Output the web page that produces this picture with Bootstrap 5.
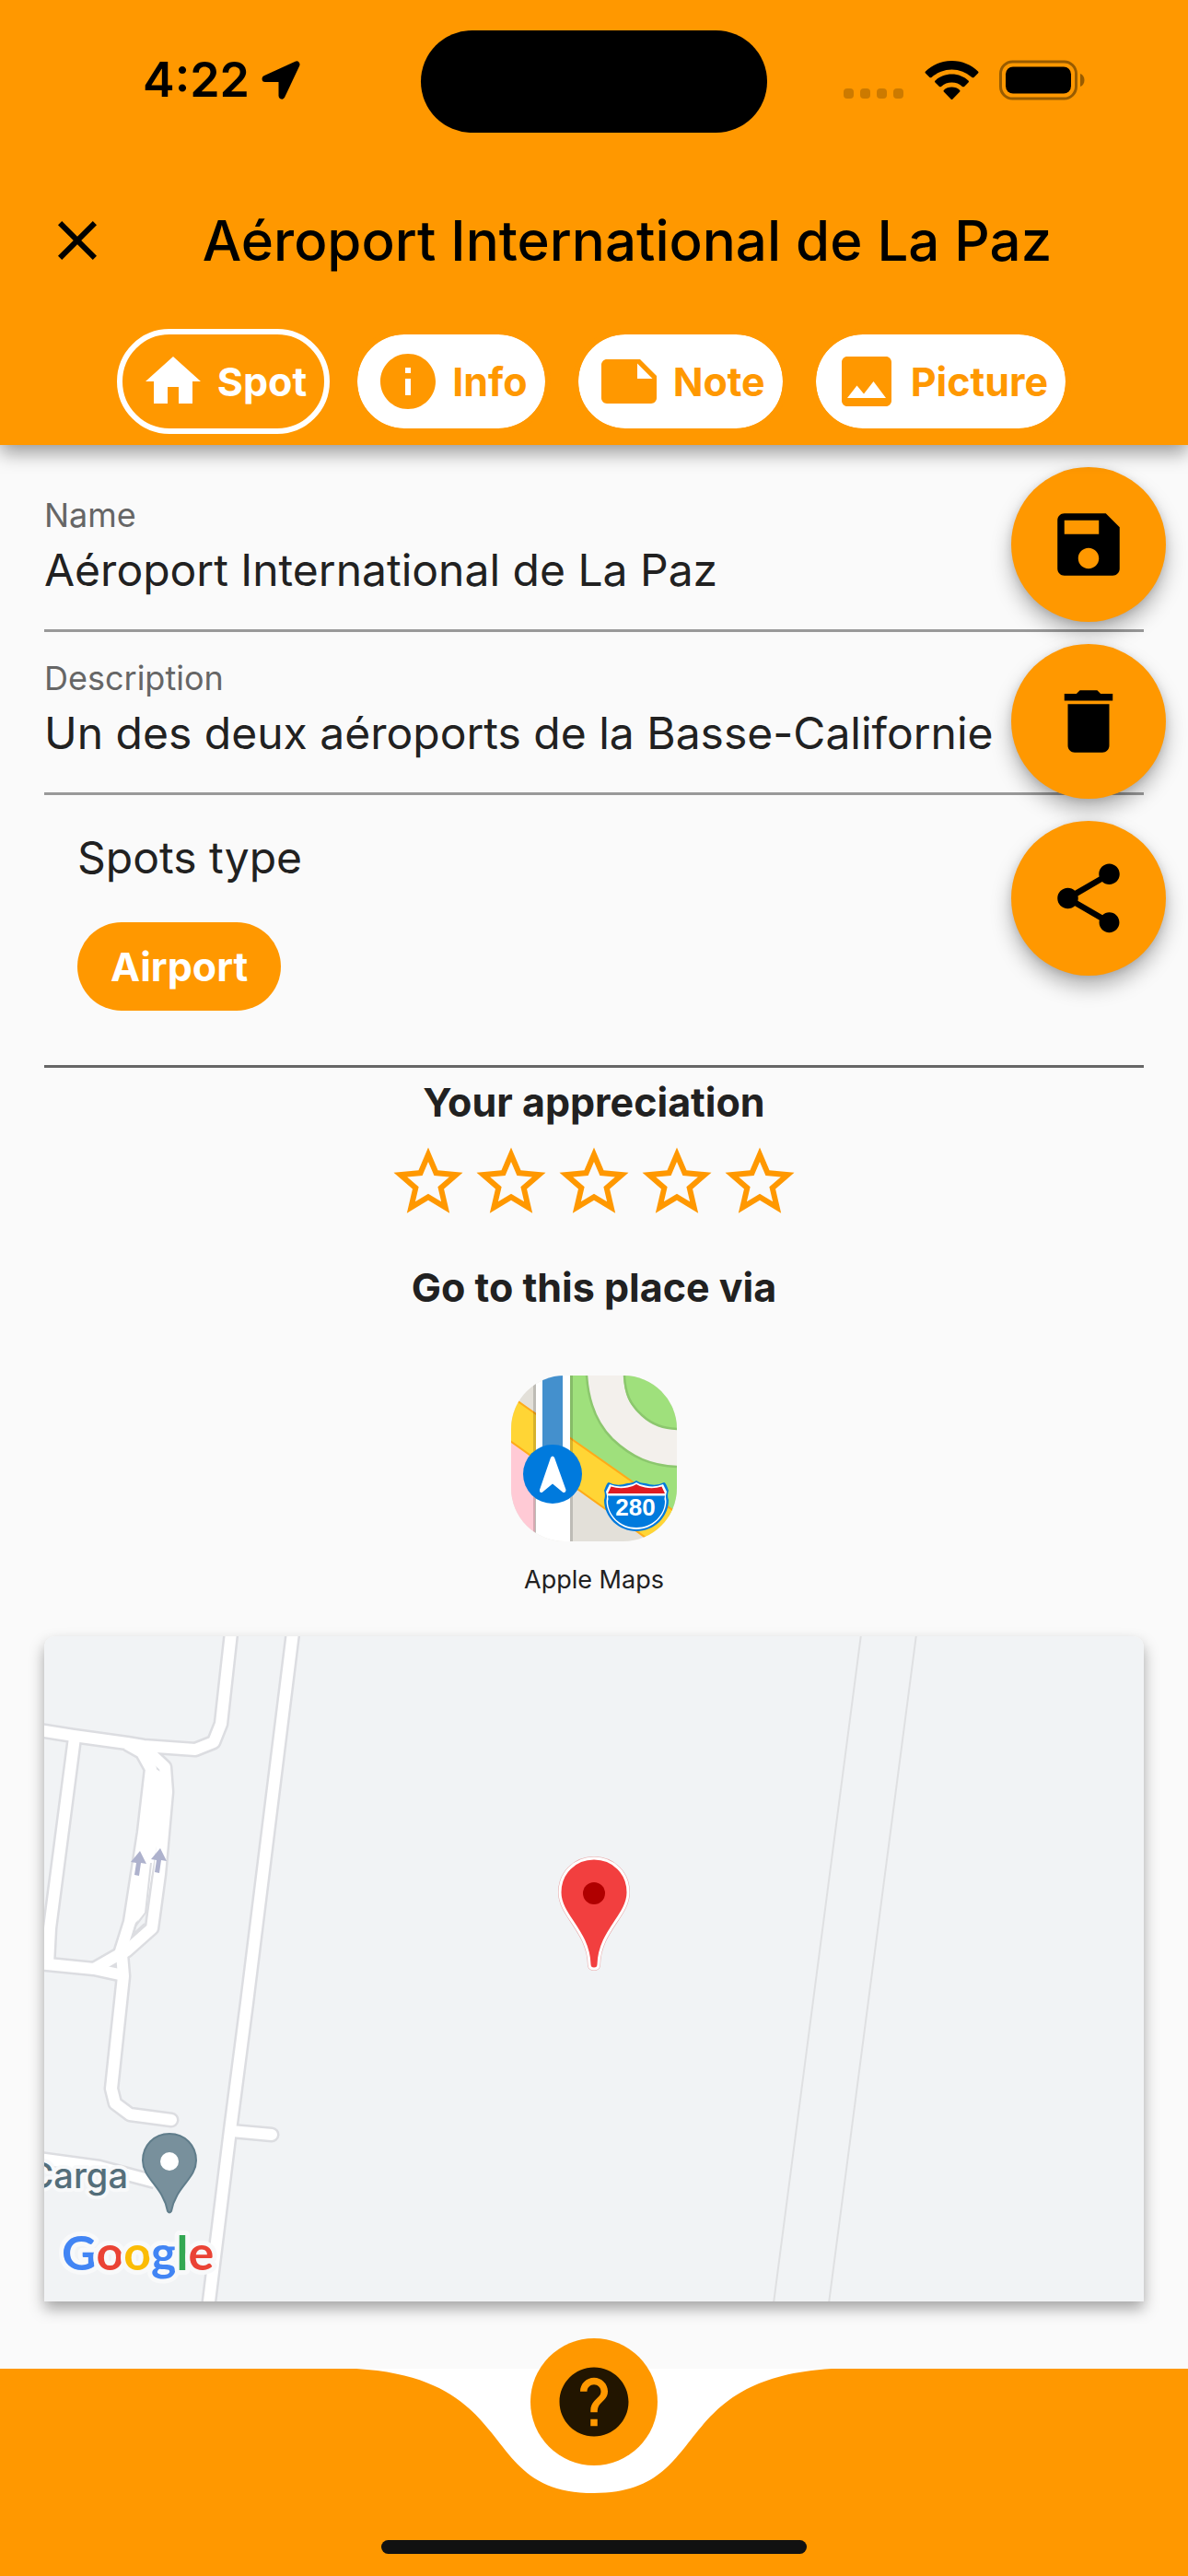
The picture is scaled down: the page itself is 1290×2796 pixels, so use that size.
<!DOCTYPE html>
<html lang="en">
<head>
<meta charset="utf-8">
<meta name="viewport" content="width=device-width, initial-scale=1">
<title>Aéroport International de La Paz</title>
<link href="https://cdn.jsdelivr.net/npm/bootstrap@5.3.0/dist/css/bootstrap.min.css" rel="stylesheet">
<style>
:root { --brand: #ff9800; --ink: #212121; }
body { font-family: Inter, "Liberation Sans", sans-serif; background: #fafafa; color: var(--ink); }
.bg-brand { background: var(--brand); }
svg { display: block; flex: none; }
.ico { width: 72px; height: 72px; fill: currentColor; }
.ico-lg { width: 90px; height: 90px; fill: currentColor; }

.app-header { box-shadow: 0 8px 20px rgba(0,0,0,.4); color: #000; position: relative; z-index: 1; }
.status { display: grid; grid-template-columns: 1fr auto 1fr; padding: 33px 0; }
.status-left { padding: 0 0 4px 155px; gap: 13px; font-size: 52px; font-weight: 600; line-height: 60px; }
.status-right { padding: 0 112px 4px 0; gap: 22px; }
.island { width: 376px; height: 111px; border-radius: 56px; background: #000; }
.toolbar { height: 168px; padding: 0 48px; }
.toolbar h1 { font-size: 60px; font-weight: 500; line-height: 72px; }
.tabs { gap: 24px; padding: 12px 0; }
.tab-pill { display: flex; align-items: center; gap: 12px; height: 114px; padding: 0 19px; border: 6px solid var(--brand); border-radius: 57px; background: #fff; background-clip: padding-box; color: var(--brand); font-size: 43px; font-weight: 700; line-height: 60px; }
.tab-pill.active { background: var(--brand); border-color: #fff; color: #fff; }

.page-main { padding: 26px 48px 72px; }
.field { padding: 29px 0 34px; border-bottom: 3px solid #999; }
.field label { display: block; font-size: 36px; line-height: 42px; color: #666; margin-bottom: 9px; }
.field input { display: block; width: 100%; height: 60px; padding: 0; border: 0; background: none; outline: 0; color: var(--ink); font-size: 48px; line-height: 60px; }
.types { padding: 38px 36px 59px; border-bottom: 3px solid #666; }
.types h2 { font-size: 48px; font-weight: 400; line-height: 60px; margin-bottom: 40px; }
.chip { height: 96px; padding: 0 36px; border: 0; border-radius: 48px; background: var(--brand); color: #fff; font-size: 43px; font-weight: 700; line-height: 60px; }
.actions { padding-top: 7px; }
.head-line { font-size: 43px; font-weight: 700; line-height: 60px; margin: 0; }
.rating { color: var(--brand); margin: 12px 0 39px; }
.rating label { cursor: pointer; }
.maps-link { color: var(--ink); text-decoration: none; gap: 24px; margin: 66px 0 43px; font-size: 27px; line-height: 36px; }
.maps-link svg { border-radius: 58px; }
.fabs { position: absolute; top: 24px; right: 24px; display: flex; flex-direction: column; gap: 24px; }
.fab { display: flex; align-items: center; justify-content: center; width: 168px; height: 168px; padding: 0; border: 0; border-radius: 50%; background: var(--brand); color: #000; box-shadow: 0 12px 22px rgba(0,0,0,.28), 0 2px 8px rgba(0,0,0,.12); }
.map-box { border-radius: 12px 12px 0 0; overflow: hidden; box-shadow: 0 8px 16px rgba(0,0,0,.34); }
.map-box svg { width: 100%; height: auto; }

.bottom-bar { height: 225px; padding-bottom: 24px; }
.notch { position: absolute; top: 0; left: 50%; transform: translateX(-50%); }
.help-btn { position: absolute; top: -33px; left: 50%; transform: translateX(-50%); display: flex; align-items: center; justify-content: center; width: 138px; height: 138px; padding: 0; border: 0; border-radius: 50%; background: var(--brand); color: #221500; }
.home-bar { width: 462px; height: 15px; border-radius: 8px; background: #111; }
</style>
</head>
<body class="d-flex flex-column min-vh-100">

<header class="app-header bg-brand">
  <div class="status align-items-center">
    <div class="status-left d-flex align-items-center">
      <span>4:22</span>
      <svg width="42" height="42" viewBox="0 0 42 42"><path d="M4 19.500 38 4 22 38V19.500z" stroke="#000" stroke-width="7" stroke-linejoin="round"/></svg>
    </div>
    <div class="island"></div>
    <div class="status-right d-flex align-items-center justify-content-end">
      <svg width="66" height="44" viewBox="0 0 66 44" fill="#cc7a00"><rect y="31" width="11" height="11" rx="4"/><rect x="18" y="31" width="11" height="11" rx="4"/><rect x="36" y="31" width="11" height="11" rx="4"/><rect x="54" y="31" width="11" height="11" rx="4"/></svg>
      <svg width="59" height="42" viewBox="0 0 59 42"><path d="M29.500 0C41 0 51 4.500 58 11.500q1 1 0 2L53.500 18q-1 .5-2 0a33 33 0 0 0-44 0q-1 .5-2 0L1 13.500q-1-1 0-2C8 4.500 18 0 29.500 0zM29.500 14.500c7 0 13.500 2.700 18 7q1 1 0 2l-4.500 4.500q-1 .5-2 0a17 17 0 0 0-23 0q-1 .5-2 0L11.500 23.500q-1-1 0-2c4.500-4.300 11-7 18-7zM29.500 28.500c3.400 0 6.400 1.200 8.500 3.200q1 1 0 2L30.500 41.500q-1 1-2 0L21 33.700q-1-1 0-2c2.100-2 5.100-3.200 8.500-3.200z"/></svg>
      <svg width="93" height="44" viewBox="0 0 93 44"><rect x="1.500" y="2" width="82" height="40" rx="13" fill="none" stroke="#995c00" stroke-width="3"/><rect x="7" y="7.500" width="71" height="29" rx="8"/><path d="M88 15c6 2 6 12 0 14z" fill="#995c00"/></svg>
    </div>
  </div>
  <div class="toolbar d-flex align-items-center">
    <button class="btn p-0 border-0 text-black" type="button" aria-label="Close"><svg class="ico" viewBox="0 0 24 24"><path d="M19 6.410 17.590 5 12 10.590 6.410 5 5 6.410 10.590 12 5 17.590 6.410 19 12 13.410 17.590 19 19 17.590 13.410 12z"/></svg></button>
    <h1 class="flex-grow-1 text-center text-nowrap m-0">Aéroport International de La Paz</h1>
  </div>
  <nav class="tabs d-flex justify-content-center">
    <button class="tab-pill active" type="button"><svg class="ico" viewBox="0 0 24 24"><path d="M10 20v-6h4v6h5v-8h3L12 3 2 12h3v8z"/></svg>Spot</button>
    <button class="tab-pill" type="button"><svg class="ico" viewBox="0 0 24 24"><path d="M12 2C6.480 2 2 6.480 2 12s4.480 10 10 10 10-4.480 10-10S17.520 2 12 2zm1 15h-2v-6h2v6zm0-8h-2V7h2v2z"/></svg>Info</button>
    <button class="tab-pill" type="button"><svg class="ico" viewBox="0 0 24 24"><path d="M22 10l-6-6H4c-1.100 0-2 .9-2 2v12.010c0 1.100.9 1.990 2 1.990l16-.01c1.100 0 2-.89 2-1.990v-8zm-7-4.500l5.500 5.500H15V5.500z"/></svg>Note</button>
    <button class="tab-pill" type="button"><svg class="ico" viewBox="0 0 24 24"><path d="M21 19V5c0-1.100-.9-2-2-2H5c-1.100 0-2 .9-2 2v14c0 1.100.9 2 2 2h14c1.100 0 2-.9 2-2zM8.500 13.500l2.500 3.010L14.500 12l4.500 6H5l3.500-4.500z"/></svg>Picture</button>
  </nav>
</header>

<main class="page-main position-relative flex-grow-1">
  <form>
    <div class="field">
      <label for="spot-name">Name</label>
      <input id="spot-name" type="text" value="Aéroport International de La Paz">
    </div>
    <div class="field">
      <label for="spot-desc">Description</label>
      <input id="spot-desc" type="text" value="Un des deux aéroports de la Basse-Californie">
    </div>
    <section class="types">
      <h2>Spots type</h2>
      <button class="chip" type="button">Airport</button>
    </section>
  </form>

  <section class="actions d-flex flex-column align-items-center">
    <h2 class="head-line">Your appreciation</h2>
    <div class="rating d-flex" role="radiogroup" aria-label="Your appreciation">
      <input class="btn-check" type="radio" name="rate" id="r1"><label for="r1" aria-label="1 star"><svg class="ico-lg" viewBox="0 0 24 24"><path id="star" d="M22 9.240l-7.190-.62L12 2 9.190 8.630 2 9.240l5.460 4.730L5.820 21 12 17.270 18.180 21l-1.630-7.030L22 9.240zM12 15.400l-3.760 2.270 1-4.280-3.320-2.880 4.380-.38L12 6.100l1.710 4.040 4.380.38-3.320 2.880 1 4.280L12 15.400z"/></svg></label>
      <input class="btn-check" type="radio" name="rate" id="r2"><label for="r2" aria-label="2 stars"><svg class="ico-lg" viewBox="0 0 24 24"><use href="#star"/></svg></label>
      <input class="btn-check" type="radio" name="rate" id="r3"><label for="r3" aria-label="3 stars"><svg class="ico-lg" viewBox="0 0 24 24"><use href="#star"/></svg></label>
      <input class="btn-check" type="radio" name="rate" id="r4"><label for="r4" aria-label="4 stars"><svg class="ico-lg" viewBox="0 0 24 24"><use href="#star"/></svg></label>
      <input class="btn-check" type="radio" name="rate" id="r5"><label for="r5" aria-label="5 stars"><svg class="ico-lg" viewBox="0 0 24 24"><use href="#star"/></svg></label>
    </div>
    <h2 class="head-line">Go to this place via</h2>
    <a class="maps-link d-flex flex-column align-items-center" href="#map">
      <svg width="180" height="180" viewBox="0 0 180 180">
        <rect width="180" height="180" fill="#e3e0d9"/>
        <path d="M0 72 26 90V180H0z" fill="#ffcad5"/>
        <path d="M64 0H180V160L64 68z" fill="#9fe07c"/>
        <path d="M82 0C84 30 94 53 110 69 130 88 152 99 184 99V58C165 58 153 54 141 43 128 32 123 20 122 0z" fill="#f3f0ec"/>
        <path d="M82 0C84 30 94 53 110 69 130 88 152 99 184 99M123 0C124 20 129 31 142 43 153 53 165 58 184 58" fill="none" stroke="#8cc76e" stroke-width="2.500"/>
        <path d="M-4 20 184 152V203L-4 69z" fill="#ffd535" stroke="#ffab19" stroke-width="2"/>
        <path d="M24 0h3v180h-3zM64 0h3v180h-3z" opacity=".16"/>
        <path d="M27 0h37v180H27z" fill="#fff"/>
        <path d="M34 0h22v90H34z" fill="#4490cd"/>
        <circle cx="45" cy="107" r="32" fill="#007add"/>
        <path d="M43 89q2-3 4 0l12.500 35q0 3.500-3 3L45 117.500 33.500 127q-3 .5-2.500-3z" fill="#fff"/>
        <path d="M106 116q9 5 20 1 6 0 10-3 4 3 10 3 11 4 20-1 2 0 5 9c0 0-2 5 0 10 0 19-16 34-35 34s-35-15-35-34c2-5 0-10 0-10q3-9 5-9z" fill="#007add"/>
        <path d="M107 118q9 4 19 1.500 6-.5 10-3.500 4 3 10 3.500 10 2.500 19-1.500l4 8q-2 5-.5 10c0 16-14.500 31-32.500 31s-32.500-15-32.500-31q1.500-5-.5-10z" fill="#fff"/>
        <path d="M108.500 120.500q9 3 18 1 5-.5 9.500-3.500 4.500 3 9.500 3.500 9 2 18-1l3.500 7.500H105z" fill="#df1b22"/>
        <path d="M105 130.500h62q-1 3 0 6c0 15-13.500 28.500-31 28.500s-31-13.500-31-28.500q1-3 0-6z" fill="#007add"/>
        <text x="135" y="152" text-anchor="middle" font-family="Liberation Sans, sans-serif" font-weight="700" font-size="26" fill="#fff">280</text>
      </svg>
      <span>Apple Maps</span>
    </a>
  </section>

  <div class="map-box" id="map">
    <svg viewBox="0 0 1194 722">
      <defs>
        <g id="roads" fill="none" stroke-linejoin="round">
          <path d="M270-4 220 398 202 536 178 730"/>
          <path d="M203-4 192 95 184 115 164 123 108 119 90 116 32 108-6 102"/>
          <path d="M33 110 6 317 4 356"/>
          <path d="M-6 355 54 361 86 368"/>
          <path d="M90 117 106 126 116 144 108 213 93 310 82 345 54 361"/>
          <path d="M100 120 112 124 131 142 133 169 125 258 117 317 90 341 81 347"/>
          <path d="M84 345 86 369 73 491 77 507 93 519 138 525" stroke-linecap="round"/>
          <path d="M203 537 247 541" stroke-linecap="round"/>
          <path d="M-6 567 60 576 120 592"/>
        </g>
      </defs>
      <rect width="1194" height="722" fill="#f1f3f5"/>
      <path d="M887-2 792 724M947-2 852 724" stroke="#dfe0e2" stroke-width="2"/>
      <use href="#roads" stroke="#dcdde1" stroke-width="17"/>
      <use href="#roads" stroke="#fff" stroke-width="12"/>
      <path d="M116 140 130 150 126 205 116 262 110 300 96 314z" fill="#fff"/>
      <path d="M116 246 110 300 99 315 97 323 109 312" fill="none" stroke="#dcdde1" stroke-width="2"/>
      <g fill="#aeb2cd"><path id="arrow" d="M104 233 111 247 105 246 103 260 98 259 100 246 94 245z"/><use href="#arrow" x="22" y="-3"/></g>
      <g font-size="38" font-weight="500" fill="#546e7a" stroke="#f8f9fa" stroke-width="8" stroke-linejoin="round" paint-order="stroke"><text x="91" y="599" text-anchor="end">Carga</text></g>
      <path d="M136 540c17 0 29 13 29 29 0 20-22 28-27 55q-2 3-4 0c-5-27-27-35-27-55 0-16 12-29 29-29z" fill="#78909c" stroke="#607d8b" stroke-width="2"/>
      <circle cx="136" cy="570" r="10" fill="#fff"/>
      <text x="19" y="688" font-family="Lato, sans-serif" font-size="52" font-weight="700" stroke="#f8f9fa" stroke-width="10" stroke-linejoin="round" paint-order="stroke"><tspan fill="#4285f4">G</tspan><tspan fill="#ea4335">o</tspan><tspan fill="#fbbc05">o</tspan><tspan fill="#4285f4">g</tspan><tspan fill="#34a853">l</tspan><tspan fill="#ea4335">e</tspan></text>
      <path d="M597 241c21 0 37 16 37 37 0 25-31 42-32 78q0 5-5 5t-5-5c-1-36-32-53-32-78 0-21 16-37 37-37z" fill="#f23f3f" stroke="#e6a4a4" stroke-width="4"/>
      <path d="M597 241c21 0 37 16 37 37 0 25-31 42-32 78q0 5-5 5t-5-5c-1-36-32-53-32-78 0-21 16-37 37-37z" fill="#f23f3f" stroke="#fff" stroke-width="3"/>
      <circle cx="597" cy="279" r="12" fill="#b00000"/>
    </svg>
  </div>

  <div class="fabs">
    <button class="fab" type="button" aria-label="Save"><svg class="ico-lg" viewBox="0 0 24 24"><path d="M17 3H5c-1.110 0-2 .9-2 2v14c0 1.100.89 2 2 2h14c1.100 0 2-.9 2-2V7l-4-4zm-5 16c-1.660 0-3-1.340-3-3s1.340-3 3-3 3 1.340 3 3-1.340 3-3 3zm3-10H5V5h10v4z"/></svg></button>
    <button class="fab" type="button" aria-label="Delete"><svg class="ico-lg" viewBox="0 0 24 24"><path d="M6 19c0 1.100.9 2 2 2h8c1.100 0 2-.9 2-2V7H6v12zM19 4h-3.500l-1-1h-5l-1 1H5v2h14V4z"/></svg></button>
    <button class="fab" type="button" aria-label="Share"><svg class="ico-lg" viewBox="0 0 24 24"><path d="M18 16.080c-.76 0-1.440.3-1.960.77L8.910 12.700c.05-.23.09-.46.09-.7s-.04-.47-.09-.7l7.050-4.110c.54.5 1.250.81 2.040.81 1.660 0 3-1.340 3-3s-1.340-3-3-3-3 1.340-3 3c0 .24.04.47.09.7L8.040 9.810C7.500 9.310 6.790 9 6 9c-1.660 0-3 1.340-3 3s1.340 3 3 3c.79 0 1.500-.31 2.040-.81l7.120 4.160c-.05.21-.08.43-.08.65 0 1.610 1.310 2.920 2.920 2.920s2.920-1.310 2.920-2.920-1.310-2.920-2.920-2.920z"/></svg></button>
  </div>
</main>

<footer class="bottom-bar bg-brand position-relative d-flex align-items-end justify-content-center">
  <svg class="notch" width="516" height="135" viewBox="0 0 516 135"><path d="M0 0C181 11 129 135 258 135S335 11 516 0z" fill="#fff"/></svg>
  <button class="help-btn" type="button" aria-label="Help"><svg class="ico-lg" viewBox="0 0 24 24"><path d="M12 2C6.480 2 2 6.480 2 12s4.480 10 10 10 10-4.480 10-10S17.520 2 12 2zm1 17h-2v-2h2v2zm2.070-7.750l-.9.920C13.450 12.900 13 13.500 13 15h-2v-.5c0-1.100.45-2.100 1.170-2.830l1.240-1.260c.37-.36.59-.86.59-1.410 0-1.100-.9-2-2-2s-2 .9-2 2H8c0-2.210 1.790-4 4-4s4 1.790 4 4c0 .88-.36 1.680-.93 2.250z"/></svg></button>
  <div class="home-bar"></div>
</footer>

<script src="https://cdn.jsdelivr.net/npm/bootstrap@5.3.0/dist/js/bootstrap.bundle.min.js"></script>
</body>
</html>
